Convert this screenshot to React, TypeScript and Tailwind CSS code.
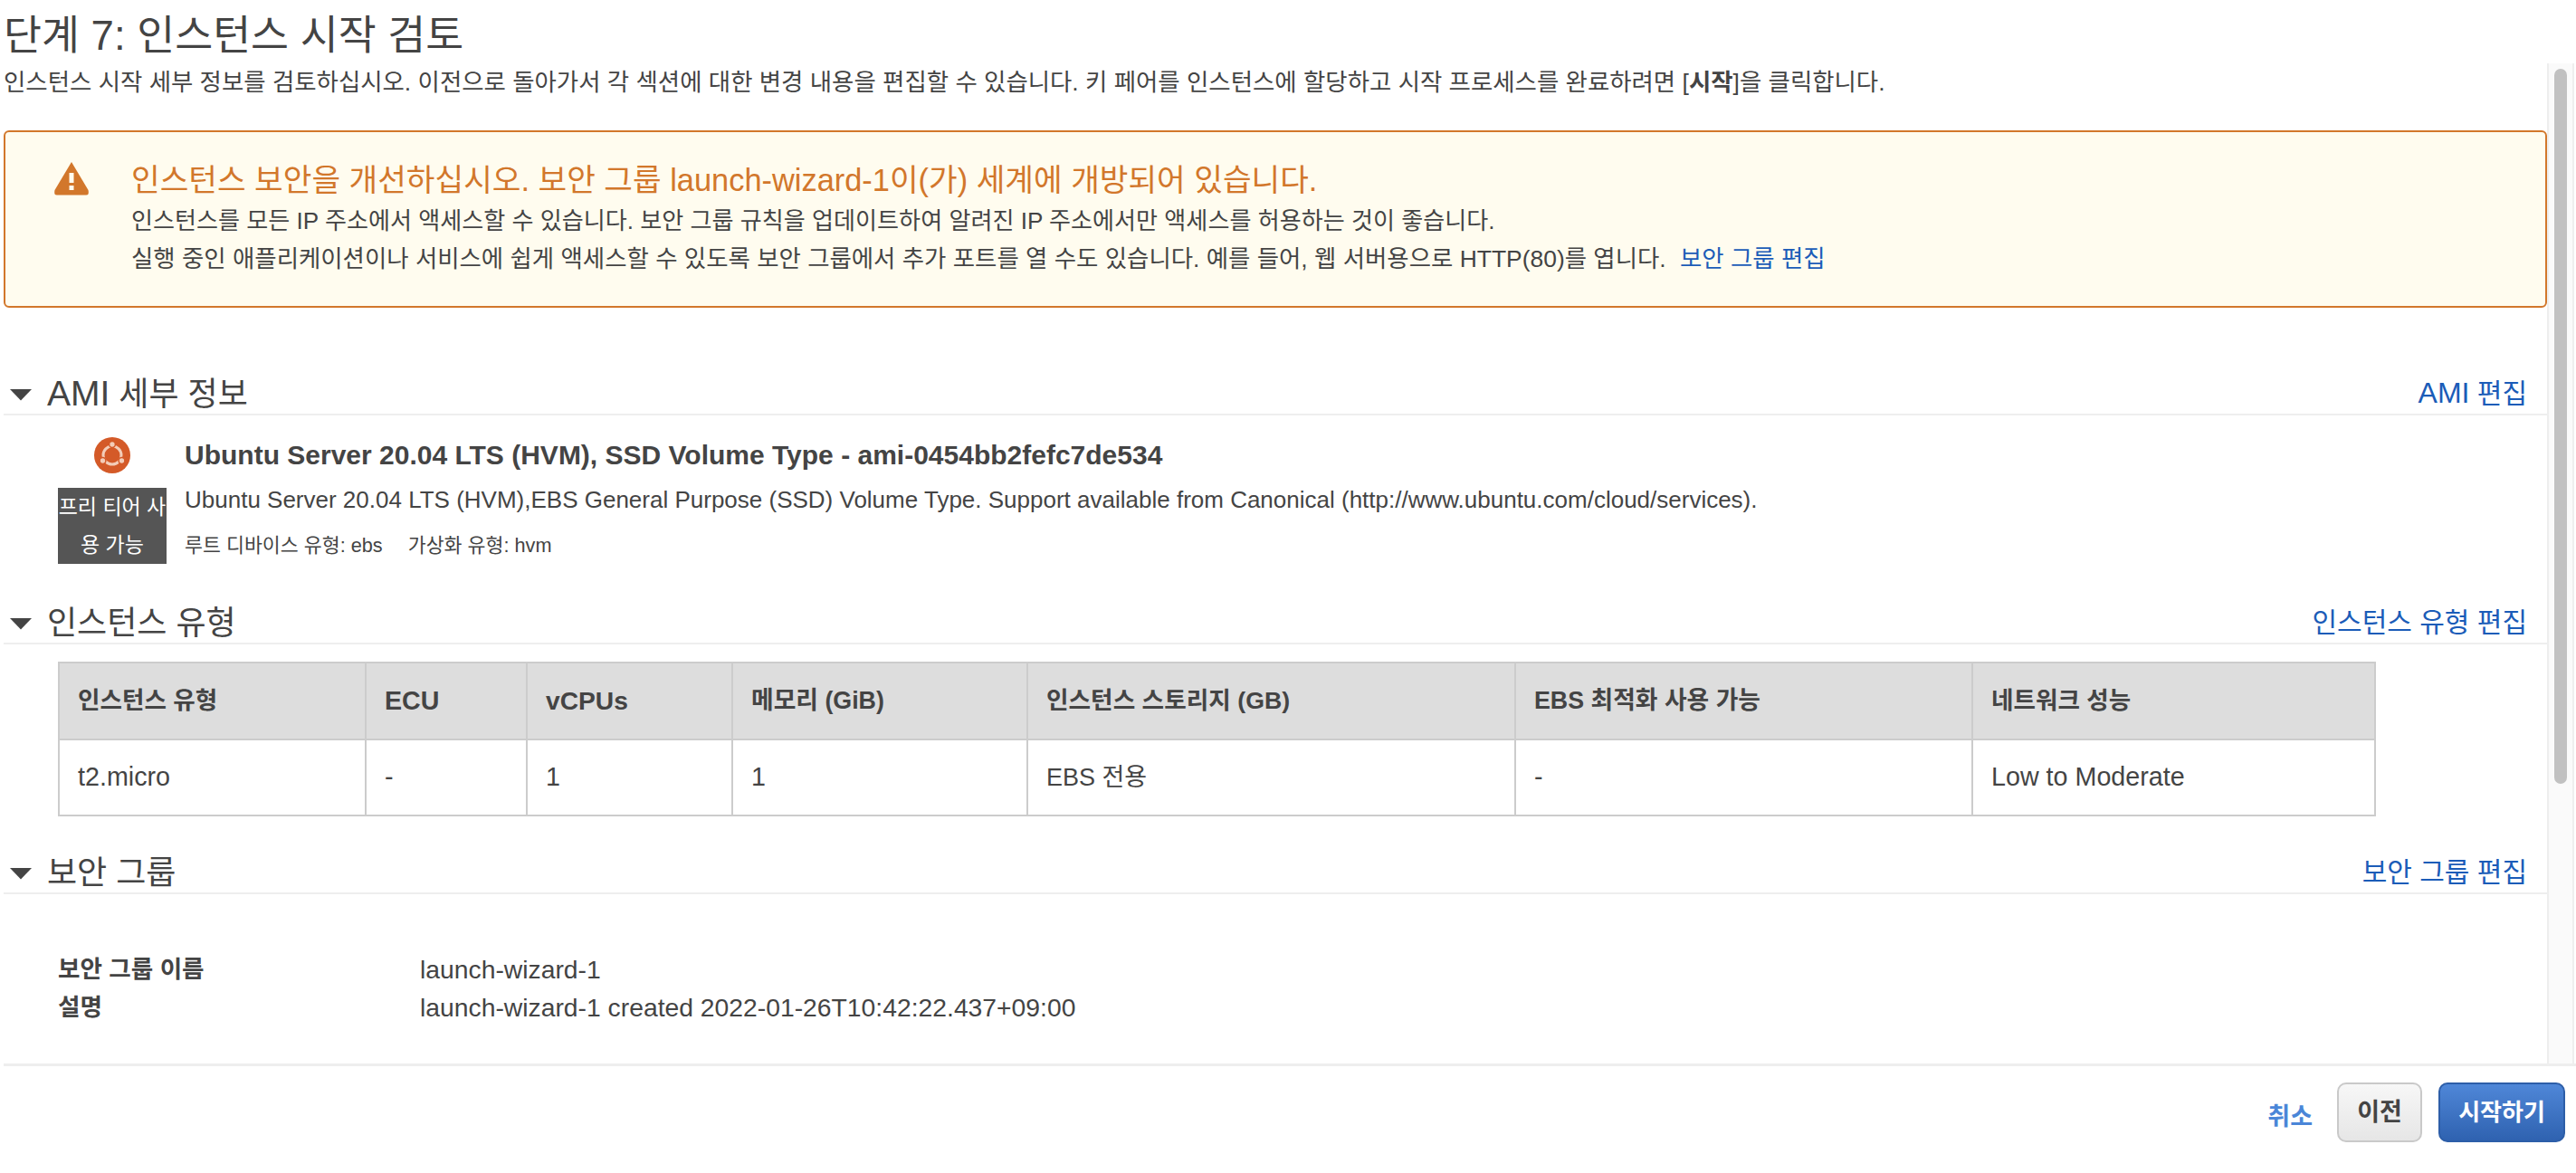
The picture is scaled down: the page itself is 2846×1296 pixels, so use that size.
const KR = "font-['Liberation_Sans','Noto_Sans_CJK_KR',sans-serif]";

function Section({ title, edit, children, className }: { title: React.ReactNode; edit: React.ReactNode; children?: React.ReactNode; className?: string }) {
  return (
    <section className={className}>
      <div className="flex h-[47px] items-end justify-between border-b-2 border-[#eeeeee]">
        <div className="flex items-center">
          <svg width="24" height="14" viewBox="0 0 24 14" className="ml-[7px] mr-[17px]">
            <path d="M0 1h24L12 13.5z" fill="#444444" />
          </svg>
          <span className="text-[36px] leading-[42px] text-[#444444]">{title}</span>
        </div>
        <a className="mr-[22px] pb-[3px] text-[30px] leading-[38px] text-[#1b5cb8]">{edit}</a>
      </div>
      {children}
    </section>
  );
}

const cols = [339, 178, 227, 326, 539, 505, 445];
const head: [string, string][] = [
  ["인스턴스 유형", "text-[26.6px]"],
  ["ECU", "text-[28.6px]"],
  ["vCPUs", "text-[28.2px]"],
  ["메모리 (GiB)", "text-[26.8px]"],
  ["인스턴스 스토리지 (GB)", "text-[26.7px]"],
  ["EBS 최적화 사용 가능", "text-[26.8px]"],
  ["네트워크 성능", "text-[26.6px]"],
];
const row: [string, string][] = [
  ["t2.micro", "text-[28.7px]"],
  ["-", "text-[28.7px]"],
  ["1", "text-[28.7px]"],
  ["1", "text-[28.7px]"],
  ["EBS 전용", "text-[27px]"],
  ["-", "text-[28.7px]"],
  ["Low to Moderate", "text-[28.7px]"],
];

export default function App() {
  return (
    <div className={`${KR} flex h-[1296px] w-[2846px] flex-col overflow-hidden bg-white text-[#444444]`}>
      <h1 className="h-[70px] pl-[4px] pt-[15px] text-[45.6px] leading-[50px] text-[#444444]">단계 7: 인스턴스 시작 검토</h1>

      <div className="ml-[4px] flex h-[1108px] border-b-[3px] border-[#eeeeee]">
        <main className="w-[2810px] shrink-0 overflow-hidden">
          <p className="pt-[3px] text-[26.45px] leading-[36px]">
            인스턴스 시작 세부 정보를 검토하십시오. 이전으로 돌아가서 각 섹션에 대한 변경 내용을 편집할 수 있습니다. 키 페어를 인스턴스에 할당하고 시작 프로세스를 완료하려면 [<b>시작</b>]을 클릭합니다.
          </p>

          <div className="mt-[35px] flex h-[196px] rounded-[6px] border-2 border-[#d2772b] bg-[#fffcef] pl-[53px] pt-[31px]">
            <svg width="40" height="37" viewBox="0 0 40 37" className="mt-[2px] shrink-0">
              <path d="M20 0 L38.5 31 Q40 36.5 36 36.5 H4 Q0 36.5 1.5 31 Z" fill="#d2772b" />
              <rect x="17.5" y="12" width="5" height="11" fill="#fffcef" />
              <rect x="17.5" y="26" width="5" height="5" fill="#fffcef" />
            </svg>
            <div className="ml-[46px]">
              <div className="text-[34.4px] leading-[44px] text-[#d2772b]">인스턴스 보안을 개선하십시오. 보안 그룹 launch-wizard-1이(가) 세계에 개방되어 있습니다.</div>
              <div className="mt-[2px] text-[26.1px] leading-[42px]">인스턴스를 모든 IP 주소에서 액세스할 수 있습니다. 보안 그룹 규칙을 업데이트하여 알려진 IP 주소에서만 액세스를 허용하는 것이 좋습니다.</div>
              <div className="text-[26.45px] leading-[42px]">
                실행 중인 애플리케이션이나 서비스에 쉽게 액세스할 수 있도록 보안 그룹에서 추가 포트를 열 수도 있습니다. 예를 들어, 웹 서버용으로 HTTP(80)를 엽니다. <a className="ml-[8px] text-[#1b5cb8]">보안 그룹 편집</a>
              </div>
            </div>
          </div>

          <Section title={<><span className="text-[39px]">AMI</span> 세부 정보</>} edit={<><span className="text-[32px]">AMI</span> 편집</>} className="mt-[72px]">
            <div className="flex pt-[24px]">
              <div className="ml-[60px] flex w-[120px] flex-col items-center">
                <svg width="40" height="40" viewBox="0 0 40 40">
                  <circle cx="20" cy="20" r="20" fill="#d45a28" />
                  <circle cx="20" cy="20" r="10" fill="none" stroke="#f3cdb8" strokeWidth="3" />
                  <circle cx="20" cy="8" r="3.4" fill="#f3cdb8" stroke="#d45a28" strokeWidth="1.5" />
                  <circle cx="9.5" cy="26" r="3.4" fill="#f3cdb8" stroke="#d45a28" strokeWidth="1.5" />
                  <circle cx="30.5" cy="26" r="3.4" fill="#f3cdb8" stroke="#d45a28" strokeWidth="1.5" />
                </svg>
                <div className="mt-[16px] h-[84px] w-[120px] bg-[#555555] text-center text-[23px] leading-[42px] text-white">프리 티어 사용 가능</div>
              </div>
              <div className="ml-[20px]">
                <div className="text-[30px] font-bold leading-[40px]">Ubuntu Server 20.04 LTS (HVM), SSD Volume Type - ami-0454bb2fefc7de534</div>
                <div className="mt-[12px] text-[26px] leading-[34px]">Ubuntu Server 20.04 LTS (HVM),EBS General Purpose (SSD) Volume Type. Support available from Canonical (http://www.ubuntu.com/cloud/services).</div>
                <div className="mt-[19px] flex text-[21.7px] leading-[30px]">
                  <span>루트 디바이스 유형: ebs</span>
                  <span className="ml-[28px]">가상화 유형: hvm</span>
                </div>
              </div>
            </div>
          </Section>

          <Section title="인스턴스 유형" edit="인스턴스 유형 편집" className="mt-[42px]">
            <table className="ml-[60px] mt-[19px] table-fixed border-collapse">
              <colgroup>
                {cols.map((w, i) => <col key={i} style={{ width: w }} />)}
              </colgroup>
              <thead>
                <tr className="h-[85px] bg-[#dddddd]">
                  {head.map(([h, s]) => <th key={h} className={`${s} border-2 border-[#cccccc] px-[20px] text-left font-bold`}>{h}</th>)}
                </tr>
              </thead>
              <tbody>
                <tr className="h-[84px]">
                  {row.map(([c, s], i) => <td key={i} className={`${s} border-2 border-[#cccccc] px-[20px]`}>{c}</td>)}
                </tr>
              </tbody>
            </table>
          </Section>

          <Section title="보안 그룹" edit="보안 그룹 편집" className="mt-[39px]">
            <div className="ml-[60px] mt-[62px] grid grid-cols-[400px_1fr] leading-[42px]">
              <b className="text-[26.6px]">보안 그룹 이름</b><span className="text-[28.3px]">launch-wizard-1</span>
              <b className="text-[26.6px]">설명</b><span className="text-[28.3px]">launch-wizard-1 created 2022-01-26T10:42:22.437+09:00</span>
            </div>
          </Section>
        </main>
        <div className="w-[30px] shrink-0 border-x-2 border-[#eeeeee] bg-[#fafafa] px-[6px] pt-[6px]">
          <div className="h-[790px] rounded-full bg-[#c1c1c1]" />
        </div>
      </div>

      <footer className="flex flex-1 items-start justify-end pr-[12px] pt-[18px] text-[26px] font-bold">
        <a className="mr-[27px] self-center pb-[24px] text-[27px] text-[#4a86d8]">취소</a>
        <button className="h-[66px] w-[94px] rounded-[10px] border-2 border-[#c9c9c9] bg-linear-to-b from-[#f7f7f7] to-[#e6e6e6] text-[27px] text-[#444444]">이전</button>
        <button className="ml-[18px] h-[66px] w-[140px] rounded-[10px] border-2 border-[#2d5ea8] bg-linear-to-b from-[#4f87d8] to-[#2f62b0] text-white">시작하기</button>
      </footer>
    </div>
  );
}
